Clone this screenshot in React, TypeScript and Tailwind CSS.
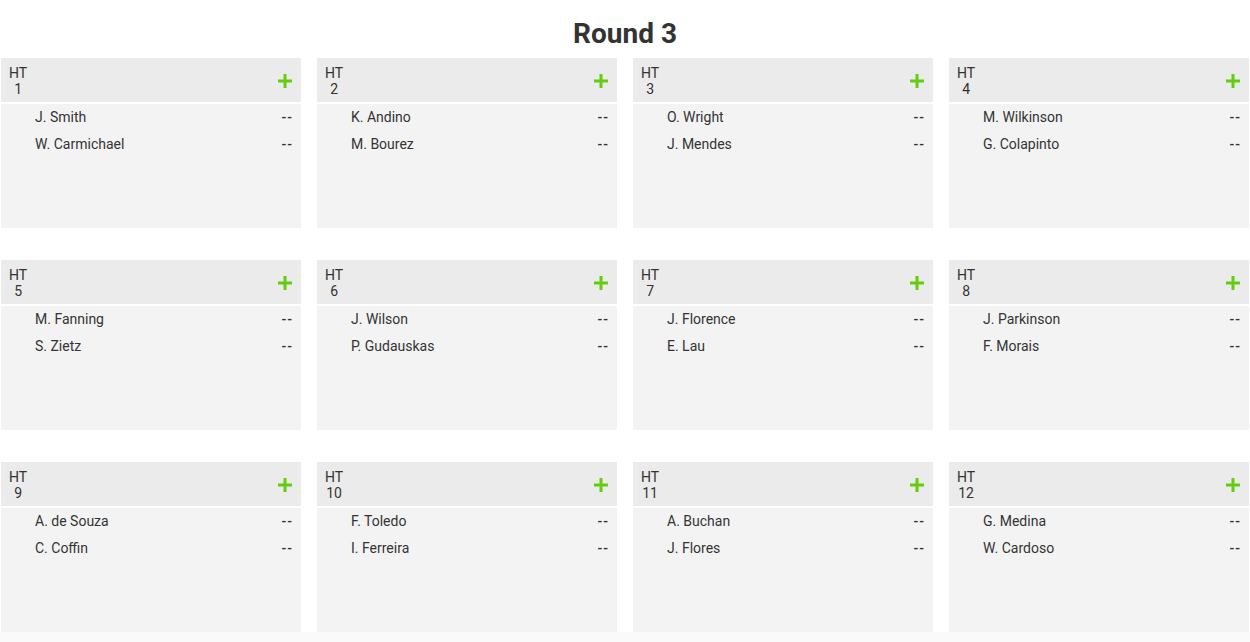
const teams: string[][] = [
  ["J. Smith", "W. Carmichael"],
  ["K. Andino", "M. Bourez"],
  ["O. Wright", "J. Mendes"],
  ["M. Wilkinson", "G. Colapinto"],
  ["M. Fanning", "S. Zietz"],
  ["J. Wilson", "P. Gudauskas"],
  ["J. Florence", "E. Lau"],
  ["J. Parkinson", "F. Morais"],
  ["A. de Souza", "C. Coffin"],
  ["F. Toledo", "I. Ferreira"],
  ["A. Buchan", "J. Flores"],
  ["G. Medina", "W. Cardoso"],
];

function HeatCard({ num, surfers }: { num: number; surfers: string[] }) {
  return (
    <div className="h-[170px] bg-[#f3f3f3] flex flex-col">
      <div className="h-[46px] bg-[#ebebeb] flex items-center justify-between pl-2 pr-[9px] border-b-2 border-white">
        <div className="inline-block text-center text-[14px] leading-[16px] text-[#333] pt-[1px]">
          HT
          <br />
          {num}
        </div>
        <svg width="14" height="14" viewBox="0 0 14 14" className="mt-[2px]">
          <rect x="5.5" y="0" width="3" height="14" fill="#66cc11" />
          <rect x="0" y="5.5" width="14" height="3" fill="#66cc11" />
        </svg>
      </div>
      <div>
        {surfers.map((s) => (
          <div key={s} className="h-[27px] flex items-center justify-between pl-[34px] pr-[8px] text-[14px] text-[#333]">
            <span>{s}</span>
            <span className="tracking-[1px] font-medium">--</span>
          </div>
        ))}
      </div>
    </div>
  );
}

export default function App() {
  return (
    <div className="w-[1250px] h-[642px] overflow-hidden bg-white flex flex-col" style={{ fontFamily: "Roboto, 'Liberation Sans', sans-serif" }}>
      <h1 className="text-center text-[28px] font-bold text-[#333] leading-[34px] pt-[17px] pb-[7px]">Round 3</h1>
      <div className="grid grid-cols-4 gap-x-4 gap-y-8 pl-[1px] pr-[1px]">
        {teams.map((t, i) => (
          <HeatCard key={i} num={i + 1} surfers={t} />
        ))}
      </div>
      <div className="flex-1 bg-[#fafafa]" />
    </div>
  );
}
